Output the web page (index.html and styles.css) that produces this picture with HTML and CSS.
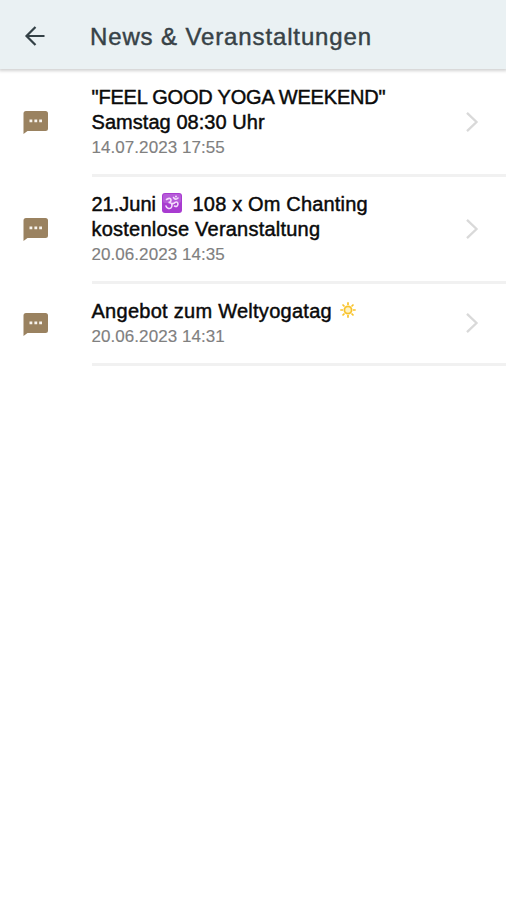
FILE: index.html
```html
<!DOCTYPE html>
<html lang="de">
<head>
<meta charset="utf-8">
<title>News &amp; Veranstaltungen</title>
<link rel="stylesheet" href="styles.css">
</head>
<body>
<svg class="defs" aria-hidden="true">
  <symbol id="message" viewBox="0 0 26 25">
    <path fill="#9a8260" d="M3 1H22.500Q25 1 25 3.500V18.500Q25 21 22.500 21H4.500L.5 24V3.500Q.5 1 3 1Z"/>
    <path fill="#f8f4ee" d="M6.500 9.500h2.800v2.800H6.500zM11.400 9.500h2.800v2.800h-2.800zM16.200 9.500H19v2.800h-2.800z"/>
  </symbol>
  <symbol id="chevron" viewBox="0 0 14 22">
    <path fill="none" stroke="#d9d9d9" stroke-width="2.300" d="M2 1.800 11.500 11 2 20.200"/>
  </symbol>
</svg>
<header class="bar">
  <svg class="back" viewBox="0 0 22 22"><path fill="none" stroke="#344146" stroke-width="2.200" d="M20.500 11H3M11.500 2 2.500 11l9 9"/></svg>
  <h1 class="bar-title">News &amp; Veranstaltungen</h1>
</header>
<main class="list">
  <article class="row">
    <svg class="message"><use href="#message"/></svg>
    <div class="body">
      <h2 class="title"><span class="line caps">"FEEL GOOD YOGA WEEKEND"</span><span class="line time">Samstag 08:30 Uhr</span></h2>
      <p class="date">14.07.2023 17:55</p>
      <svg class="chevron"><use href="#chevron"/></svg>
    </div>
  </article>
  <article class="row">
    <svg class="message"><use href="#message"/></svg>
    <div class="body">
      <h2 class="title"><span class="line om-line">21.Juni <svg class="om" viewBox="0 0 20 20"><rect width="20" height="20" rx="3" fill="#a83bd0"/><rect x="1" y="1" width="18" height="9" rx="2" fill="#b65bd9"/><path fill="none" stroke="#f3dcfb" stroke-width="1.600" stroke-linecap="round" d="M4.500 6.500Q8.500 4 9 7 9 9.300 6.500 9.500 10 9.500 10 12.500 9.500 16 6.500 15.500 4.500 15 4 13M10 10.500Q12 11 13 9.500 15.500 8 16 11 15.500 14.500 12.500 13M11.500 4.500Q13.500 7.500 16 5"/><circle cx="14" cy="3.500" r="1" fill="#f3dcfb"/></svg><span class="om-text">108 x Om Chanting</span></span><span class="line sub">kostenlose Veranstaltung</span></h2>
      <p class="date">20.06.2023 14:35</p>
      <svg class="chevron"><use href="#chevron"/></svg>
    </div>
  </article>
  <article class="row short">
    <svg class="message"><use href="#message"/></svg>
    <div class="body">
      <h2 class="title"><span class="line offer">Angebot zum Weltyogatag <svg class="sun" viewBox="0 0 16 16"><circle cx="8" cy="8" r="3.600" fill="#fff3c4" stroke="#f8c32c" stroke-width="1.800"/><path stroke="#f8c32c" stroke-width="1.700" d="M8 .3V3M8 13v2.700M.3 8H3M13 8h2.700M2.500 2.500l2 2M11.500 11.500l2 2M2.500 13.500l2-2M11.500 4.500l2-2"/></svg></span></h2>
      <p class="date">20.06.2023 14:31</p>
      <svg class="chevron"><use href="#chevron"/></svg>
    </div>
  </article>
</main>
</body>
</html>
```
FILE: styles.css
```css
* { box-sizing: border-box; }
body { margin: 0; background: #fff; font-family: "Liberation Sans", Arial, sans-serif; }
h1, h2, p { margin: 0; font-weight: 400; }
.defs { display: none; }
.bar { display: flex; align-items: center; height: 69px; padding: 2px 0 0 24px; background: #eaf1f3; box-shadow: 0 1px 3px 1px #d2d2d2; }
.back { width: 22px; height: 22px; margin-right: 44px; }
.bar-title { padding-top: 2px; font-size: 24px; line-height: 28px; letter-spacing: .87px; color: #374247; -webkit-text-stroke: .45px #374247; white-space: nowrap; }
.list { padding-top: 1px; }
.row { display: grid; grid-template-columns: 68.500px 1fr; align-items: center; height: 107px; padding-left: 23px; }
.row.short { height: 82px; }
.message { width: 26px; height: 25px; margin-bottom: 2px; }
.body { display: grid; grid-template-columns: 1fr 14px; height: 100%; align-content: center; align-items: center; padding: 1px 27px 0 0; border-bottom: 3px solid #f1f1f1; }
.title { grid-column: 1; }
.date { grid-column: 1; font-size: 17px; line-height: 25px; letter-spacing: .06px; color: #808080; -webkit-text-stroke: .15px #808080; }
.chevron { grid-column: 2; grid-row: 1 / span 2; width: 14px; height: 22px; margin-bottom: 2px; }
.line { display: flex; align-items: center; height: 25px; font-size: 20px; line-height: 25px; color: #0a0a0a; -webkit-text-stroke: .45px #0a0a0a; white-space: pre; }
.caps { letter-spacing: -.2px; }
.time { letter-spacing: .05px; }
.om-text { letter-spacing: .17px; }
.sub { letter-spacing: .22px; }
.offer { letter-spacing: .27px; }
.om { width: 20px; height: 20px; margin-right: 11px; margin-bottom: 3px; -webkit-text-stroke: 0; }
.sun { width: 16px; height: 16px; margin: 0 0 3px 2px; -webkit-text-stroke: 0; }
```
